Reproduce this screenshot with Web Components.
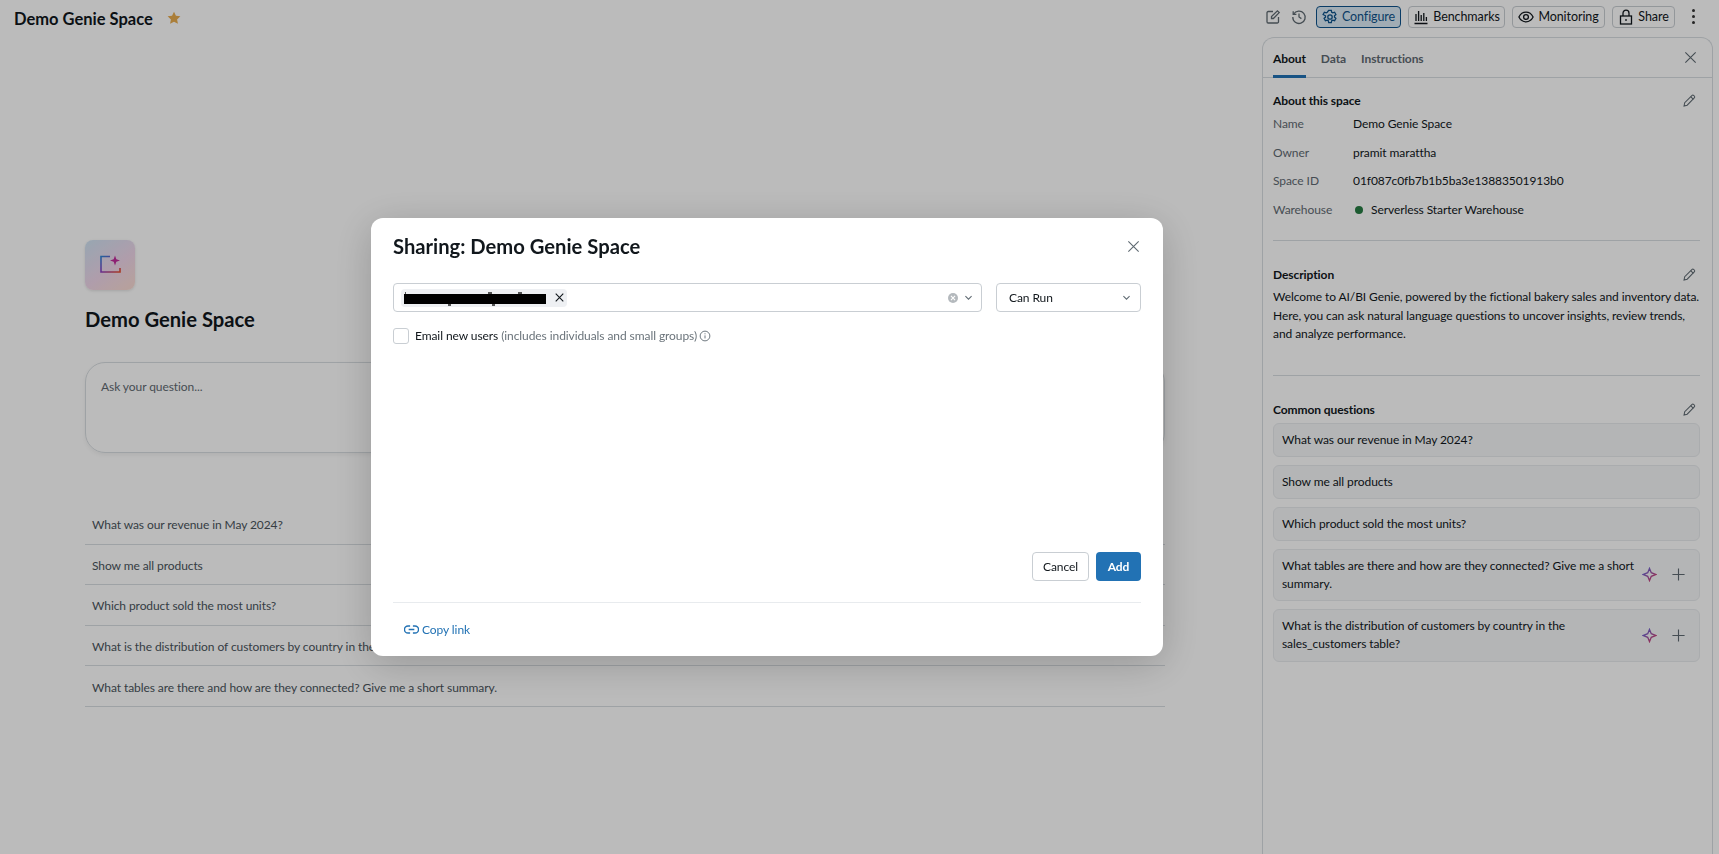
<!DOCTYPE html>
<html lang="en">
<head>
<meta charset="utf-8">
<title>Demo Genie Space</title>
<style>
    html, body { margin: 0; height: 100%; overflow: hidden; background: #fff; }
    body { font-family: Lato, "Open Sans", "Liberation Sans", sans-serif; font-size: 12px; letter-spacing: -.08px; color: #11171c; }
</style>
</head>
<body>
<genie-page>
    <top-bar slot="header"></top-bar>
    <welcome-pane slot="main"></welcome-pane>
    <side-panel slot="side"></side-panel>
</genie-page>
<share-dialog></share-dialog>

<script>
const ICONS = {
    edit: `<path d="M8 2.500H3.200A1.200 1.200 0 0 0 2 3.700v9.100A1.200 1.200 0 0 0 3.200 14h9.100a1.200 1.200 0 0 0 1.200-1.200V8" fill="none"/><path d="M6.500 9.500V7.600L12.400 1.800l1.800 1.800-5.800 5.900z" fill="none"/>`,
    history: `<path d="M2.600 5.200A6.200 6.200 0 1 1 1.800 8" fill="none"/><path d="M2.200 2.200v3.200h3.200M8 4.600V8l2.400 1.600" fill="none"/>`,
    gear: `<circle cx="8" cy="8" r="2.200" fill="none"/><path d="M6.700 1.300h2.600l.4 1.900 1.100.6 1.800-.6 1.300 2.300-1.400 1.300v1.300l1.400 1.300-1.300 2.300-1.800-.6-1.100.6-.4 1.900H6.700l-.4-1.900-1.100-.6-1.800.6-1.300-2.300 1.400-1.300V6.800L1.100 5.500l1.300-2.300 1.800.6 1.100-.6z" fill="none"/>`,
    chart: `<path d="M1.500 14.500h13M3 12V5M5.600 12V2M8.200 12V6M10.800 12V4M13.400 12V8" fill="none"/>`,
    eye: `<path d="M.9 8C2.400 5 5 3.200 8 3.200S13.600 5 15.100 8c-1.500 3-4.100 4.800-7.100 4.800S2.400 11 .9 8z" fill="none"/><circle cx="8" cy="8" r="2.400" fill="none"/>`,
    lock: `<rect x="2.500" y="7" width="11" height="8" fill="none"/><path d="M5 7V4.200a3 3 0 0 1 6 0V7M8 10v2" fill="none"/>`,
    close: `<path d="M2.500 2.500l11 11M13.500 2.500l-11 11" fill="none"/>`,
    pencil: `<path d="M2.200 13.800l.7-3.400 7.600-7.700a1.500 1.500 0 0 1 2.100 0l.5.5a1.500 1.500 0 0 1 0 2.100l-7.600 7.700z" fill="none"/><path d="M9.300 3.900l2.800 2.800" fill="none"/>`,
    plus: `<path d="M8 1.500v13M1.500 8h13" fill="none"/>`,
    chevron: `<path d="M3.500 6l4.500 4.500L12.500 6" fill="none"/>`,
    info: `<circle cx="8" cy="8" r="6.500" fill="none"/><path d="M8 7.200v4M8 4.400v1.300" fill="none"/>`,
    link: `<path d="M6.500 4.200H4.300a3.800 3.800 0 0 0 0 7.600h2.200M9.500 4.200h2.200a3.800 3.800 0 0 1 0 7.600H9.500M5 8h6" fill="none"/>`
};

class AppIcon extends HTMLElement {
    connectedCallback() {
        const size = this.getAttribute("size") || 16;
        const stroke = this.getAttribute("stroke") || 1.3;
        this.attachShadow({ mode: "open" }).innerHTML = `
            <style>
                :host { display: inline-flex; flex: none; }
                svg { display: block; stroke: currentColor; stroke-width: ${stroke}; }
            </style>
            <svg width="${size}" height="${size}" viewBox="0 0 16 16">${ICONS[this.getAttribute("name")]}</svg>
        `;
    }
}

class GeniePage extends HTMLElement {
    constructor() {
        super();
        this.attachShadow({ mode: "open" }).innerHTML = `
            <style>
                :host { display: grid; grid-template-columns: 1262px 451px; grid-template-rows: 37px 1fr; height: 100vh; background: #fff; }
                .head { grid-column: 1 / 3; width: 1719px; }
            </style>
            <div class="head"><slot name="header"></slot></div>
            <slot name="main"></slot>
            <slot name="side"></slot>
        `;
    }
}

class ToolButton extends HTMLElement {
    constructor() {
        super();
        this.attachShadow({ mode: "open" }).innerHTML = `
            <style>
                :host { display: inline-flex; align-items: center; justify-content: center; gap: 4px; height: 20px; width: var(--w); box-sizing: content-box; border: 1px solid #c9ced3; border-radius: 4px; font-size: 12.5px; color: #11171c; white-space: nowrap; }
                :host([active]) { border-color: #0e538b; background: #dcebf6; color: #0e538b; }
            </style>
            <slot></slot>
        `;
    }
}

class TopBar extends HTMLElement {
    constructor() {
        super();
        this.attachShadow({ mode: "open" }).innerHTML = `
            <style>
                :host { display: flex; align-items: center; height: 37px; padding: 0 14px; box-sizing: border-box; }
                h1 { margin: 0; font-size: 16.5px; font-weight: 700; letter-spacing: 0; }
                .star { margin-left: 14px; margin-bottom: 2px; color: #e8ac4e; font-size: 0; }
                .tools { margin-left: auto; display: flex; align-items: center; gap: 7px; color: #5f6a72; margin-bottom: 4px; }
                .plain { display: flex; gap: 10px; margin-right: 2px; }
                .kebab { display: flex; flex-direction: column; gap: 3px; margin: 0 10px 0 10px; }
                .kebab i { width: 3px; height: 3px; border-radius: 50%; background: #333; }
            </style>
            <h1>Demo Genie Space</h1>
            <span class="star"><svg width="14" height="14" viewBox="0 0 16 16" fill="currentColor"><path d="M8 .8l2.200 4.700 5.100.6-3.800 3.500 1 5.100L8 12.200l-4.500 2.500 1-5.100L.7 6.100l5.100-.6z"/></svg></span>
            <div class="tools">
                <div class="plain"><app-icon name="edit"></app-icon><app-icon name="history"></app-icon></div>
                <tool-button active style="--w:83px"><app-icon name="gear"></app-icon>Configure</tool-button>
                <tool-button style="--w:95px"><app-icon name="chart"></app-icon>Benchmarks</tool-button>
                <tool-button style="--w:91px"><app-icon name="eye"></app-icon>Monitoring</tool-button>
                <tool-button style="--w:61px"><app-icon name="lock"></app-icon>Share</tool-button>
                <div class="kebab"><i></i><i></i><i></i></div>
            </div>
        `;
    }
}

class WelcomePane extends HTMLElement {
    constructor() {
        super();
        const questions = [
            "What was our revenue in May 2024?",
            "Show me all products",
            "Which product sold the most units?",
            "What is the distribution of customers by country in the sales_customers table?",
            "What tables are there and how are they connected? Give me a short summary."
        ];
        this.attachShadow({ mode: "open" }).innerHTML = `
            <style>
                :host { display: block; padding: 203px 0 0 85px; width: 1080px; }
                .logo { width: 50px; height: 50px; border-radius: 8px; display: flex; align-items: center; justify-content: center; background: linear-gradient(145deg, #cfe3f3, #efd7ea 55%, #fbdcd2); box-shadow: 0 1px 3px rgba(0,0,0,.12); }
                h2 { margin: 15px 0 0; height: 28px; line-height: 28px; font-size: 20.2px; font-weight: 700; letter-spacing: 0; }
                .ask { margin-top: 29px; height: 91px; box-sizing: border-box; padding: 16px 15px; border: 1px solid #d8dde1; border-radius: 20px; color: #5f6a72; box-shadow: 0 2px 4px rgba(0,0,0,.06); }
                ul { list-style: none; margin: 51px 0 0; padding: 0; }
                li { height: 40.6px; box-sizing: border-box; display: flex; align-items: center; padding: 2px 7px 0; border-bottom: 1px solid #d8dde1; color: #4a545c; white-space: nowrap; }
            </style>
            <div class="logo">
                <svg width="22" height="22" viewBox="0 0 22 22" fill="none">
                    <defs><linearGradient id="lg" x1="0" y1="0" x2="1" y2="1"><stop offset="0" stop-color="#2f86d6"/><stop offset=".5" stop-color="#8f3fc0"/><stop offset="1" stop-color="#e8502e"/></linearGradient></defs>
                    <path d="M11 2.500H2v15.500h19v-4" stroke="url(#lg)" stroke-width="1.600"/>
                    <path d="M16 1.500l1.300 3.700 3.700 1.300-3.700 1.300L16 11.500l-1.300-3.700-3.700-1.300 3.700-1.300z" fill="#c12c9c"/>
                </svg>
            </div>
            <h2>Demo Genie Space</h2>
            <div class="ask">Ask your question...</div>
            <ul>${questions.map(q => `<li>${q}</li>`).join("")}</ul>
        `;
    }
}

class InfoRow extends HTMLElement {
    constructor() {
        super();
        this.attachShadow({ mode: "open" }).innerHTML = `
            <style>
                :host { display: flex; height: 28.8px; align-items: center; }
                .label { width: 80px; color: #5f6a72; }
                .value { display: flex; align-items: center; gap: 8px; }
            </style>
            <span class="label">${this.getAttribute("label")}</span>
            <span class="value"><slot></slot></span>
        `;
    }
}

class QuestionCard extends HTMLElement {
    constructor() {
        super();
        const extra = this.hasAttribute("actions") ? `
            <span class="acts">
                <svg width="15" height="15" viewBox="0 0 16 16" fill="none"><defs><linearGradient id="sp" x1="0" y1="0" x2="1" y2="1"><stop offset="0" stop-color="#5b6ee8"/><stop offset="1" stop-color="#e0355f"/></linearGradient></defs><path d="M8 1.500l1.900 4.600 4.600 1.900-4.600 1.900L8 14.500l-1.900-4.600L1.500 8l4.600-1.900z" stroke="url(#sp)" stroke-width="1.400"/></svg>
                <app-icon name="plus" size="15" stroke="1.200"></app-icon>
            </span>` : "";
        this.attachShadow({ mode: "open" }).innerHTML = `
            <style>
                :host { display: flex; align-items: center; box-sizing: border-box; min-height: 34px; padding: 7px 13px 7px 8px; background: #f6f7f9; border: 1px solid #e8ebee; border-radius: 6px; line-height: 18.3px; }
                .t { flex: 1; }
                .acts { display: flex; align-items: center; gap: 14px; margin-left: 6px; color: #5f6a72; }
            </style>
            <span class="t"><slot></slot></span>${extra}
        `;
    }
}

class PanelSection extends HTMLElement {
    constructor() {
        super();
        this.attachShadow({ mode: "open" }).innerHTML = `
            <style>
                :host { display: block; margin: 0 12px 0 10px; }
                header { display: flex; justify-content: space-between; align-items: center; height: 18px; font-weight: 700; color: #11171c; }
                app-icon { color: #5f6a72; margin-right: 3px; }
            </style>
            <header>${this.getAttribute("heading")}<app-icon name="pencil" size="15" stroke="1.100"></app-icon></header>
            <slot></slot>
        `;
    }
}

class SidePanel extends HTMLElement {
    constructor() {
        super();
        this.attachShadow({ mode: "open" }).innerHTML = `
            <style>
                :host { display: block; box-sizing: border-box; height: 817px; border: 1px solid #d8dde1; border-bottom: 0; border-radius: 12px 12px 0 0; }
                nav { display: flex; align-items: stretch; gap: 15px; height: 40px; padding: 0 10px; box-sizing: border-box; border-bottom: 1px solid #d8dde1; color: #5f6a72; font-weight: 700; font-size: 12px; }
                nav span { display: flex; align-items: center; padding-top: 2px; box-sizing: border-box; }
                nav .on { color: #11171c; border-bottom: 3px solid #2272b4; margin-bottom: -1px; padding-top: 3px; }
                nav app-icon { margin: 12px 4px 0 auto; }
                .about { margin-top: 13px; }
                .desc { margin-top: 24px; }
                .desc p { margin: 5px 0 0; line-height: 18.5px; }
                .common { margin-top: 25px; }
                hr { border: 0; border-top: 1px solid #d8dde1; margin: 0 12px 0 10px; }
                .list { display: flex; flex-direction: column; gap: 7.7px; margin-top: 4px; }
            </style>
            <nav>
                <span class="on">About</span><span>Data</span><span>Instructions</span>
                <app-icon name="close" size="15" stroke="1.200"></app-icon>
            </nav>
            <panel-section class="about" heading="About this space">
                <div>
                    <info-row label="Name">Demo Genie Space</info-row>
                    <info-row label="Owner">pramit marattha</info-row>
                    <info-row label="Space ID">01f087c0fb7b1b5ba3e13883501913b0</info-row>
                    <info-row label="Warehouse"><span style="width:8px;height:8px;border-radius:50%;background:#277c43;margin-left:2px"></span>Serverless Starter Warehouse</info-row>
                </div>
            </panel-section>
            <hr style="margin-top:16px">
            <panel-section class="desc" heading="Description">
                <p>Welcome to AI/BI Genie, powered by the fictional bakery sales and inventory data. Here, you can ask natural language questions to uncover insights, review trends, and analyze performance.</p>
            </panel-section>
            <hr style="margin-top:31px">
            <panel-section class="common" heading="Common questions">
                <div class="list">
                    <question-card>What was our revenue in May 2024?</question-card>
                    <question-card>Show me all products</question-card>
                    <question-card>Which product sold the most units?</question-card>
                    <question-card actions>What tables are there and how are they connected? Give me a short summary.</question-card>
                    <question-card actions>What is the distribution of customers by country in the sales_customers table?</question-card>
                </div>
            </panel-section>
        `;
    }
}

class ShareDialog extends HTMLElement {
    constructor() {
        super();
        this.attachShadow({ mode: "open" }).innerHTML = `
            <style>
                :host { position: fixed; inset: 0; background: rgba(0,0,0,.265); }
                .modal { position: absolute; left: 371px; top: 218px; width: 792px; height: 438px; box-sizing: border-box; padding: 0 22px; display: flex; flex-direction: column; background: #fff; border-radius: 12px; box-shadow: 0 8px 40px rgba(0,0,0,.2); color: #11171c; }
                header { display: flex; align-items: center; justify-content: space-between; height: 56px; box-sizing: border-box; }
                h3 { margin: 0; font-size: 20.2px; font-weight: 700; letter-spacing: 0; }
                header app-icon { color: #5f6a72; }
                .pick { display: flex; gap: 14px; margin-top: 9px; }
                .field { height: 29px; box-sizing: border-box; border: 1px solid #c9ced3; border-radius: 4px; display: flex; align-items: center; }
                .who { width: 589px; padding: 0 5px 0 7px; }
                .role { width: 145px; padding: 0 8px 0 12px; justify-content: space-between; }
                .chip { position: relative; z-index: 0; width: 166px; height: 18px; box-sizing: border-box; background: #eef0f3; border-radius: 4px; display: flex; align-items: center; justify-content: flex-end; padding-right: 2px; }
                .redact { position: absolute; left: 3px; top: 5px; width: 142px; height: 10px; background: #000; }
                .redact::before { content: ""; position: absolute; left: 0; right: 0; top: -2px; bottom: -2px; z-index: -1; background:
                    linear-gradient(#555,#555) 1px 0/1px 2px no-repeat,
                    linear-gradient(#555,#555) 84px 0/4px 2px no-repeat,
                    linear-gradient(#555,#555) 114px 0/4px 2px no-repeat,
                    linear-gradient(#555,#555) 44px 100%/3px 2px no-repeat,
                    linear-gradient(#555,#555) 88px 100%/3px 2px no-repeat; }
                .clear { margin-left: auto; width: 10px; height: 10px; border-radius: 50%; background: #b4b9bd; color: #fff; display: flex; align-items: center; justify-content: center; }
                .who > app-icon { margin: 0 2px 0 5px; color: #5f6a72; }
                .role app-icon { color: #5f6a72; }
                label { display: flex; align-items: center; margin-top: 16px; height: 15px; }
                .box { width: 14px; height: 14px; border: 1px solid #c9ced3; border-radius: 3px; margin-right: 6px; }
                .hint { color: #6b747b; margin-left: 3px; }
                label app-icon { color: #5f6a72; margin-left: 2px; }
                .actions { margin-top: auto; display: flex; justify-content: flex-end; gap: 7px; }
                button { font: inherit; letter-spacing: inherit; height: 29px; padding: 0; border-radius: 4px; }
                .cancel { width: 57px; background: #fff; border: 1px solid #c9ced3; color: #11171c; }
                .add { width: 45px; background: #2272b4; border: 0; color: #fff; font-weight: 700; }
                footer { margin-top: 21px; margin-bottom: 18px; border-top: 1px solid #e8ebee; padding: 17px 0 0 11px; display: flex; align-items: center; gap: 3px; color: #2272b4; height: 18px; }
            </style>
            <div class="modal">
                <header><h3>Sharing: Demo Genie Space</h3><app-icon name="close" size="15" stroke="1.200"></app-icon></header>
                <div class="pick">
                    <div class="field who">
                        <span class="chip"><span class="redact"></span><app-icon name="close" size="11" stroke="1.600"></app-icon></span>
                        <span class="clear"><app-icon name="close" size="6" stroke="3"></app-icon></span>
                        <app-icon name="chevron" size="11" stroke="1.500"></app-icon>
                    </div>
                    <div class="field role">Can Run<app-icon name="chevron" size="11" stroke="1.500"></app-icon></div>
                </div>
                <label><span class="box"></span>Email new users<span class="hint">(includes individuals and small groups)</span><app-icon name="info" size="12" stroke="1.200"></app-icon></label>
                <div class="actions"><button class="cancel">Cancel</button><button class="add">Add</button></div>
                <footer><app-icon name="link" size="15" stroke="1.500"></app-icon>Copy link</footer>
            </div>
        `;
    }
}

customElements.define("app-icon", AppIcon);
customElements.define("genie-page", GeniePage);
customElements.define("tool-button", ToolButton);
customElements.define("top-bar", TopBar);
customElements.define("welcome-pane", WelcomePane);
customElements.define("info-row", InfoRow);
customElements.define("question-card", QuestionCard);
customElements.define("panel-section", PanelSection);
customElements.define("side-panel", SidePanel);
customElements.define("share-dialog", ShareDialog);
</script>
</body>
</html>
